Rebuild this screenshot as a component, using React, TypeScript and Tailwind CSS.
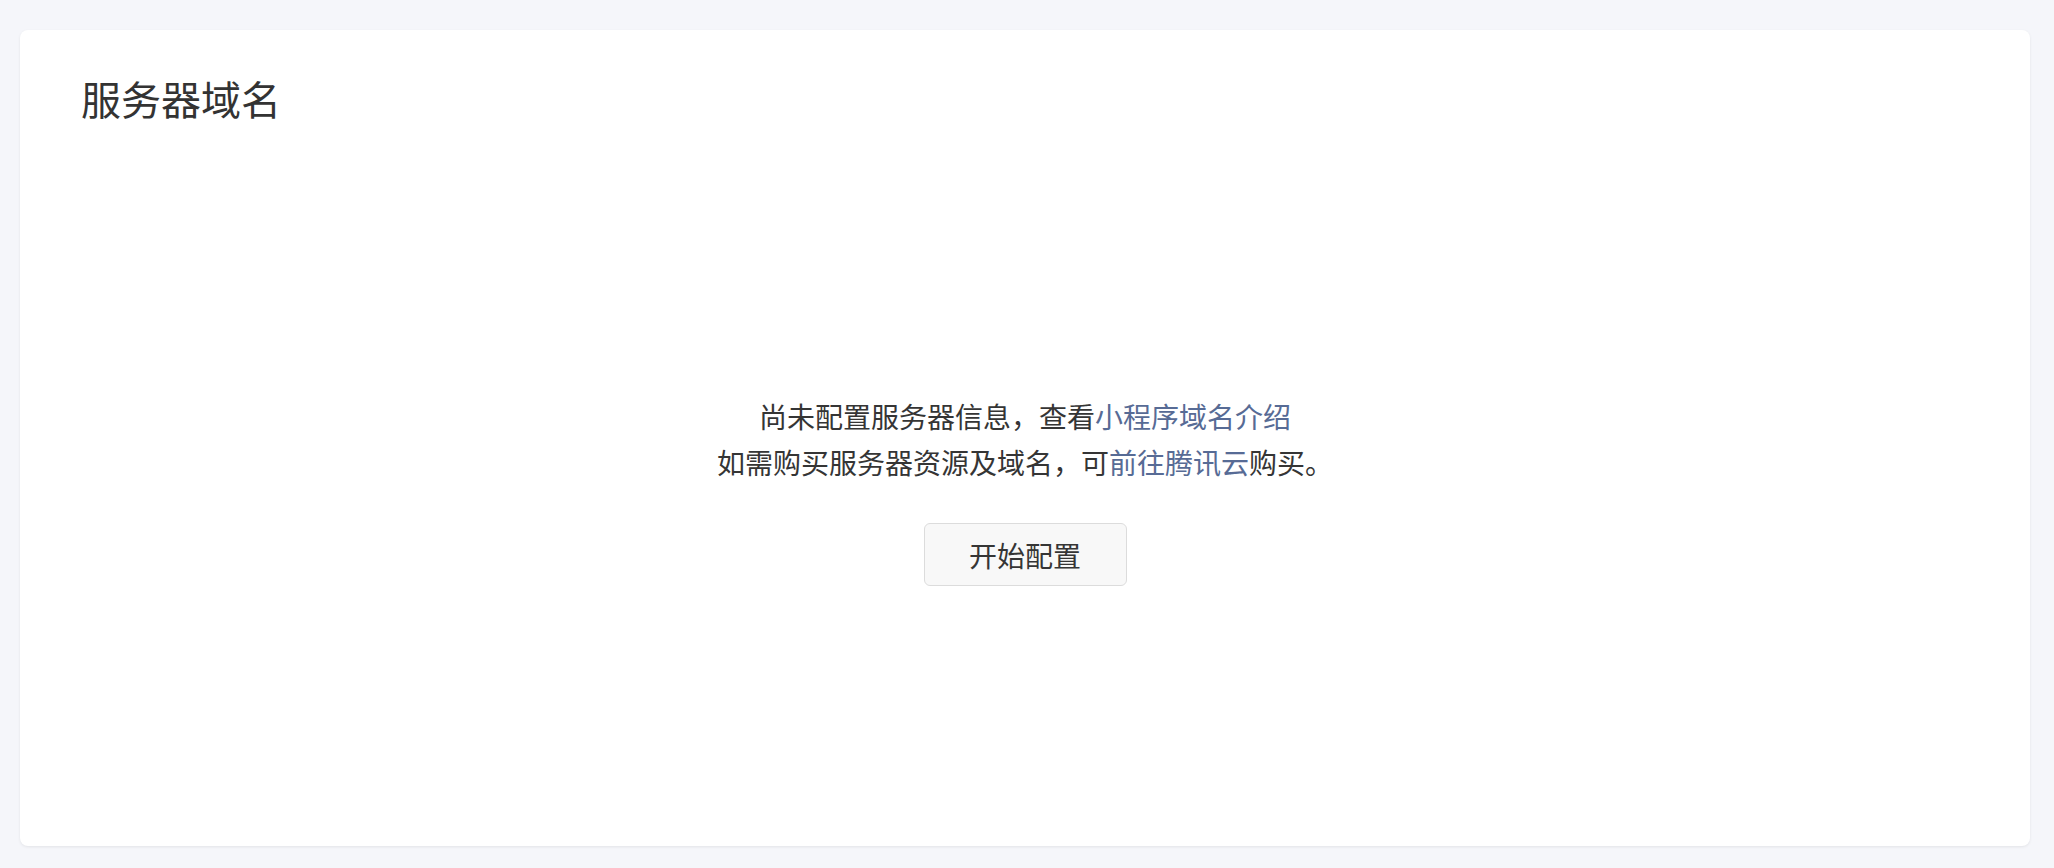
import React from 'react';

const FONT = { fontFamily: '"Noto Sans CJK SC", "Noto Sans", sans-serif' };

export default function App() {
  return (
    <div className="min-h-[868px] bg-[#f5f6fa] pt-[30px] pl-[20px] pr-[24px]" style={FONT}>
      <div className="h-[816px] rounded-[8px] bg-white shadow-[0_1px_3px_rgba(0,0,0,0.08)] px-[61px] pt-[40px]">
        <h1 className="text-[40px] leading-[56px] font-normal text-[#333333]">服务器域名</h1>

        <div className="mt-[267px] flex flex-col items-center text-[28px] leading-[46px] text-[#353535]">
          <p>
            尚未配置服务器信息，查看<a className="text-[#576b95] cursor-pointer">小程序域名介绍</a>
          </p>
          <p>
            如需购买服务器资源及域名，可<a className="text-[#576b95] cursor-pointer">前往腾讯云</a>购买。
          </p>
          <button className="mt-[38px] w-[203px] h-[63px] rounded-[6px] border border-[#dcdcdc] bg-[#f8f8f8] text-[28px] text-[#353535]">
            开始配置
          </button>
        </div>
      </div>
    </div>
  );
}
